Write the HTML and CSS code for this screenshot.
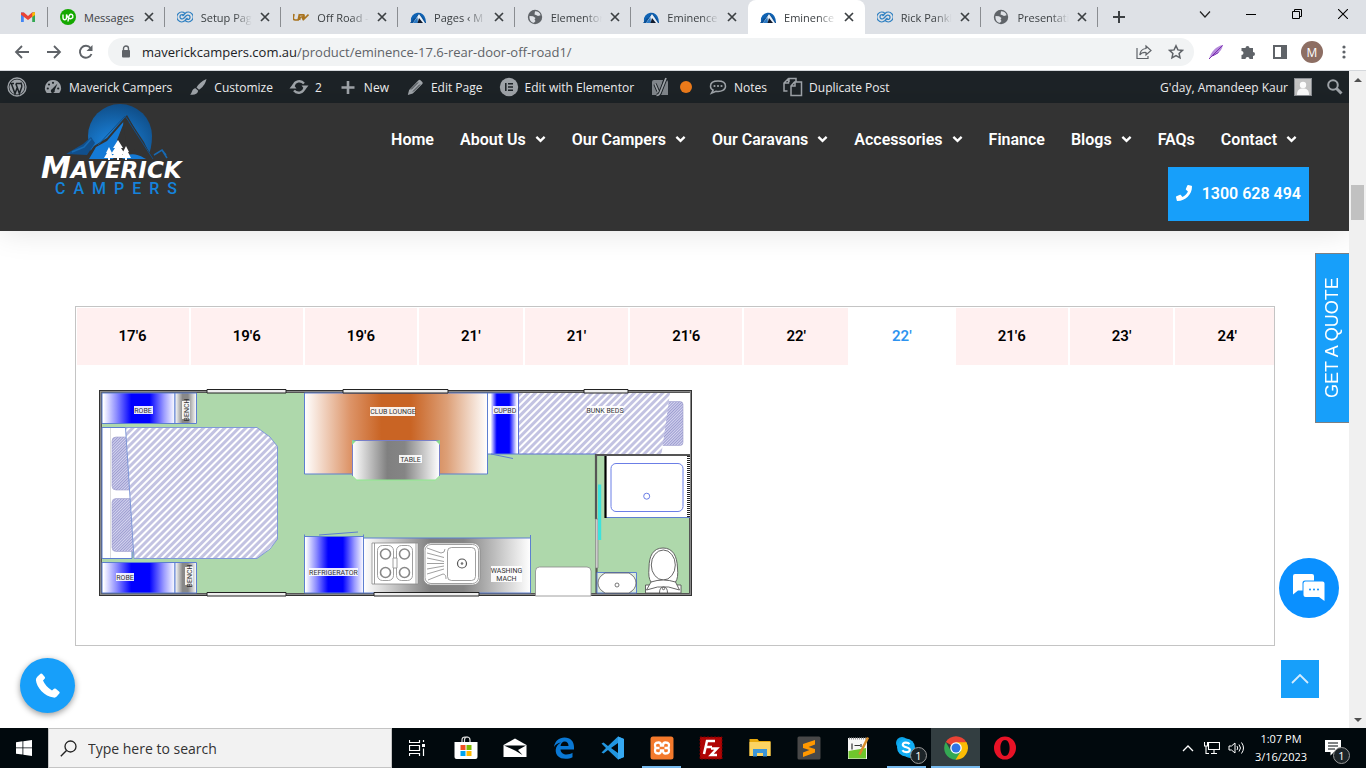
FILE: index.html
```html
<!DOCTYPE html>
<html lang="en">
<head>
<meta charset="utf-8">
<meta name="viewport" content="width=device-width, initial-scale=1">
<title>Eminence 17.6 Rear Door Off Road - Maverick Campers</title>
<link rel="stylesheet" href="styles.css">
</head>
<body>
<svg class="sprite" aria-hidden="true">
  <symbol id="i-close" viewBox="0 0 10 10"><path d="M1 1l8 8M9 1l-8 8" stroke="#3c4043" stroke-width="1.7" fill="none"/></symbol>
  <symbol id="i-peak" viewBox="0 0 16 16"><path d="M1 12A7.300 7.300 0 1 1 15.500 10L16 14H1z" fill="#0f63b4"/><path d="M0 14l4-5 1 .5L9 4l5 6 2 4z" fill="#0c4f94"/><path d="M3 14L9 5l2.500 3.500L15 14z" fill="#e8f0f8"/><path d="M3 14l4.500-6 .5 6z" fill="#2b79c4"/><path d="M7.500 14L9 9l4 5z" fill="#111a2c"/></symbol>
  <symbol id="i-globe" viewBox="0 0 16 16"><circle cx="8" cy="8" r="7.200" fill="#5f6368"/><path d="M2.500 7l3.500.3 2.500 1.700-1 1.500 1 1.500-1.500 1.800C4.500 13.800 2 11 2.500 7zM8 2.200c3 0 5 1.600 5.600 4L11 7 9 6l-1.500-.5z" fill="#dee1e6"/></symbol>
  <symbol id="i-rings" viewBox="0 0 16 16"><g fill="none" stroke="#2f80c2" stroke-width="1.300"><path d="M8 4.500A4.800 4.800 0 1 0 8 11.500L10.500 9M8 11.500A4.800 4.800 0 1 0 8 4.500L5.500 7"/><path d="M9.500 6.500L7 9A2.200 2.200 0 1 1 7 6.500M6.500 9.500L9 7A2.200 2.200 0 1 1 9 9.500"/></g></symbol>
  <symbol id="i-down" viewBox="0 0 12 8"><path d="M1.500 1.800L6 6l4.500-4.200" fill="none" stroke="#fff" stroke-width="2.600"/></symbol>
</svg>

<div class="tabstrip">
  <nav class="tabs" aria-label="Browser tabs">
    <a class="tab pinned" href="#" aria-label="Gmail"><svg width="16" height="16" viewBox="0 0 16 16"><path d="M1 3.500h2.800V13H1z" fill="#4285f4"/><path d="M12.200 3.500H15V13h-2.800z" fill="#34a853"/><path d="M1 3.500h3L8 7l4-3.500h3v2.300L8 11 1 5.800z" fill="#ea4335"/><path d="M12.200 4L15 3v3l-2.800 2z" fill="#fbbc04"/></svg></a>
    <a class="tab" href="#"><svg width="16" height="16" viewBox="0 0 16 16"><circle cx="8" cy="8" r="8" fill="#14a800"/><path d="M3 5.500v3c0 3 3.500 3 3.500 0v-3c1 3.500 3.500 5 5 4 2.500-1.500 1.300-4.500-.8-4.300C8.500 5.500 8.500 9 8 12.500" fill="none" stroke="#fff" stroke-width="1.400"/></svg><span class="tab-title whole">Messages</span><svg class="tab-x"><use href="#i-close"/></svg></a>
    <a class="tab" href="#"><svg width="16" height="16"><use href="#i-rings"/></svg><span class="tab-title">Setup Pag</span><svg class="tab-x"><use href="#i-close"/></svg></a>
    <a class="tab" href="#"><svg width="16" height="16" viewBox="0 0 16 16"><path d="M1 5l-.8 4q0 2 2 2h3l1.300-6M6.500 11l.8-3.500M7 5.800h3.500q1 2-1.500 2.200l1.500 3M11 5.500v4.500l4.500-4.500" fill="none" stroke="#a97420" stroke-width="1.700"/></svg><span class="tab-title">Off Road -</span><svg class="tab-x"><use href="#i-close"/></svg></a>
    <a class="tab" href="#"><svg width="16" height="16"><use href="#i-peak"/></svg><span class="tab-title">Pages ‹ M</span><svg class="tab-x"><use href="#i-close"/></svg></a>
    <a class="tab" href="#"><svg width="16" height="16"><use href="#i-globe"/></svg><span class="tab-title">Elementor</span><svg class="tab-x"><use href="#i-close"/></svg></a>
    <a class="tab bare" href="#"><svg width="16" height="16"><use href="#i-peak"/></svg><span class="tab-title">Eminence</span><svg class="tab-x"><use href="#i-close"/></svg></a>
    <a class="tab current" href="#" aria-current="page"><svg width="16" height="16"><use href="#i-peak"/></svg><span class="tab-title">Eminence</span><svg class="tab-x"><use href="#i-close"/></svg></a>
    <a class="tab" href="#"><svg width="16" height="16"><use href="#i-rings"/></svg><span class="tab-title">Rick Pankl</span><svg class="tab-x"><use href="#i-close"/></svg></a>
    <a class="tab" href="#"><svg width="16" height="16"><use href="#i-globe"/></svg><span class="tab-title">Presentati</span><svg class="tab-x"><use href="#i-close"/></svg></a>
  </nav>
  <button class="new-tab" aria-label="New tab"><svg width="12" height="12" viewBox="0 0 12 12"><path d="M6 0v12M0 6h12" stroke="#3c4043" stroke-width="2"/></svg></button>
  <div class="win-controls">
    <button aria-label="Search tabs"><svg width="12" height="12" viewBox="0 0 12 12"><path d="M1 3.500L6 9l5-5.500" fill="none" stroke="#222" stroke-width="1.200"/></svg></button>
    <button aria-label="Minimize"><svg width="10" height="10" viewBox="0 0 10 10"><path d="M0 5.500h10" stroke="#000"/></svg></button>
    <button aria-label="Restore"><svg width="10" height="10" viewBox="0 0 10 10"><path d="M.5 2.500h7v7h-7zM2.500 2.500v-2h7v7h-2" fill="none" stroke="#000"/></svg></button>
    <button aria-label="Close"><svg width="10" height="10" viewBox="0 0 10 10"><path d="M0 0l10 10M10 0L0 10" stroke="#000" stroke-width="1.100"/></svg></button>
  </div>
</div>

<div class="toolbar">
  <button class="tool" aria-label="Back"><svg width="16" height="16" viewBox="0 0 16 16"><path d="M15 8H2M8 2L2 8l6 6" fill="none" stroke="#5f6368" stroke-width="1.800"/></svg></button>
  <button class="tool" aria-label="Forward"><svg width="16" height="16" viewBox="0 0 16 16"><path d="M1 8h13M8 2l6 6-6 6" fill="none" stroke="#5f6368" stroke-width="1.800"/></svg></button>
  <button class="tool" aria-label="Reload"><svg width="16" height="16" viewBox="0 0 16 16"><path d="M13.500 10A6 6 0 1 1 12.600 4" fill="none" stroke="#5f6368" stroke-width="1.900"/><path d="M14.500 1v6h-6z" fill="#5f6368"/></svg></button>
  <div class="omnibox">
    <svg width="10" height="14" viewBox="0 0 10 14"><path d="M2.500 6V3.500a2.500 2.500 0 0 1 5 0V6" fill="none" stroke="#5f6368" stroke-width="1.400"/><rect x="1" y="5" width="8" height="7.500" rx="1" fill="#5f6368"/></svg>
    <a class="url" href="#"><span>maverickcampers.com.au</span>/product/eminence-17.6-rear-door-off-road1/</a>
    <button aria-label="Share"><svg width="16" height="16" viewBox="0 0 16 16"><path d="M1 4v10.500h11V12M10 2l5 4.500-5 4.500V8.500C7 8.300 5 9 3.800 11 4 7.500 6 5 10 4.500z" fill="none" stroke="#5f6368" stroke-width="1.200"/></svg></button>
    <button aria-label="Bookmark"><svg width="16" height="16" viewBox="0 0 16 16"><path d="M8 1.800l1.900 4.100 4.500.5-3.300 3 .9 4.400L8 11.600l-4 2.200.9-4.400-3.300-3 4.500-.5z" fill="none" stroke="#5f6368" stroke-width="1.500"/></svg></button>
  </div>
  <button class="ext" aria-label="Pen extension"><svg width="16" height="16" viewBox="0 0 16 16"><path d="M1 15C3 8 8 2 15 1c-1 5-5 10-12 11z" fill="#b58adb"/><path d="M1 15L14.500 1.500M4.500 12l6-3.500" fill="none" stroke="#7b2fb0" stroke-width="1"/></svg></button>
  <button class="ext" aria-label="Extensions"><svg width="16" height="16" viewBox="0 0 16 16"><path d="M1.500 4h4a2 2 0 1 1 4 0h3.500v4a2 2 0 1 1 0 4v3H9.500a2 2 0 1 0-4 0h-4v-4a2 2 0 1 0 0-4z" fill="#5f6368"/></svg></button>
  <button class="ext" aria-label="Side panel"><svg width="14" height="14" viewBox="0 0 14 14"><rect x="1" y="1" width="12" height="12" fill="#fff" stroke="#5f6368" stroke-width="2"/><path d="M8 1h5v12H8z" fill="#5f6368"/></svg></button>
  <button class="ext" aria-label="Profile"><span class="avatar-m">M</span></button>
  <button class="ext" aria-label="Menu"><svg width="4" height="16" viewBox="0 0 4 16"><g fill="#5f6368"><circle cx="2" cy="3" r="1.600"/><circle cx="2" cy="8" r="1.600"/><circle cx="2" cy="13" r="1.600"/></g></svg></button>
</div>

<div class="viewport">
  <div class="page">
    <nav class="adminbar" aria-label="WordPress toolbar">
      <a href="#" aria-label="About WordPress"><svg width="20" height="20" viewBox="0 0 20 20"><circle cx="10" cy="10" r="9" fill="none" stroke="#a0a5aa" stroke-width="1.400"/><circle cx="10" cy="10" r="7.600" fill="#a0a5aa"/><path d="M3 6.500h4M9 6.500h4.500M4.300 6.500L8 16.500l2.300-6M8.800 6.500l3.600 10 2.300-6.500c.6-2-.5-2.800-.9-4.500" fill="none" stroke="#1d2327" stroke-width="1.500"/></svg></a>
      <a href="#"><svg width="20" height="20" viewBox="0 0 20 20"><path d="M10 3a8 8 0 0 0-6.500 12.700q.4.300 1 .3h11q.6 0 1-.3A8 8 0 0 0 10 3z" fill="#a0a5aa"/><g fill="#1d2327"><circle cx="10" cy="5.800" r="1.100"/><circle cx="6" cy="7.500" r="1.100"/><circle cx="4.800" cy="11.500" r="1.100"/><circle cx="15.200" cy="11.500" r="1.100"/><path d="M14.500 6.500l-2.800 6.800a2 2 0 1 1-2.600-1.200z"/></g></svg>Maverick Campers</a>
      <a href="#"><svg width="20" height="20" viewBox="0 0 20 20"><path d="M18.500 2c-5 2-8.500 5.500-10 8.500l2.500 2.300c3-1.800 6.500-5.800 7.500-10.800zM7.600 11.300l2.600 2.500c-.5 3.500-4.500 4.700-8.200 3.700 2.200-.8 1.500-6 5.600-6.200z" fill="#a0a5aa"/></svg>Customize</a>
      <a href="#"><svg width="20" height="20" viewBox="0 0 20 20"><path d="M4.500 9A6 6 0 0 1 15 6.500M15.500 11A6 6 0 0 1 5 13.500" fill="none" stroke="#a0a5aa" stroke-width="2.300"/><path d="M12.500 8.500h7L16 13zM.5 11.500h7L4 7z" fill="#a0a5aa"/></svg>2</a>
      <a href="#"><svg width="20" height="20" viewBox="0 0 20 20"><path d="M10 4v13M3.500 10.500h13" stroke="#a0a5aa" stroke-width="2.600"/></svg>New</a>
      <a href="#"><svg width="20" height="20" viewBox="0 0 20 20"><path d="M13.500 3.200q1-1 2 0l1.800 1.800q1 1 0 2l-9.500 9.500-5 1.500 1.300-5z" fill="#a0a5aa"/><path d="M6 12.500l7-7M8 14.500l7-7" stroke="#1d2327" stroke-width=".8"/></svg>Edit Page</a>
      <a href="#"><svg width="20" height="20" viewBox="0 0 20 20"><circle cx="10" cy="10" r="9.200" fill="#a0a5aa"/><path d="M6.800 6v8M9 6.800h5M9 10h5M9 13.200h5" stroke="#1d2327" stroke-width="1.500"/></svg>Edit with Elementor</a>
      <a class="yoast" href="#" aria-label="Yoast SEO"><svg width="20" height="20" viewBox="0 0 20 20"><path d="M4 3h9l-4 15H2V5q0-2 2-2zM16 3q2 0 2 2v13h-7z" fill="#82878c"/><path d="M5 7l3 7M16 1l-6 15q-1 2.500-3.500 2.500" fill="none" stroke="#1d2327" stroke-width="3.400"/><path d="M5 7l3.200 7.500M16 1l-6 15q-1 2.500-3.500 2.500" fill="none" stroke="#a0a5aa" stroke-width="1.700"/></svg><i class="dot"></i></a>
      <a href="#"><svg width="20" height="20" viewBox="0 0 20 20"><path d="M10 4c-4.500 0-7.500 2-7.500 5.200 0 1.800 1 3.200 2.700 4l-1.700 3 4.500-2c5.500.8 9.500-1.300 9.500-5C17.500 6 14.500 4 10 4z" fill="none" stroke="#a0a5aa" stroke-width="1.500"/><g fill="#a0a5aa"><circle cx="6.500" cy="9" r="1.100"/><circle cx="10" cy="9" r="1.100"/><circle cx="13.500" cy="9" r="1.100"/></g></svg>Notes</a>
      <a href="#"><svg width="20" height="20" viewBox="0 0 20 20"><path d="M6 5V1.500h7V5M4.500 14H1V6l4.500-4.500M8 18.500V9l3.500-4h7v13.500zM1 6h4.500V2M8 9h4V5" fill="none" stroke="#a0a5aa" stroke-width="1.500"/></svg>Duplicate Post</a>
      <a class="howdy" href="#">G'day, Amandeep Kaur<svg width="18" height="18" viewBox="0 0 18 18"><rect x=".5" y=".5" width="17" height="17" fill="#c6c6c6" stroke="#8c8f94"/><circle cx="9" cy="7" r="3.200" fill="#fff"/><path d="M3 17c0-5 2-6.500 6-6.500s6 1.500 6 6.500z" fill="#fff"/></svg></a>
      <a class="find" href="#" aria-label="Search"><svg width="20" height="20" viewBox="0 0 20 20"><circle cx="8" cy="8" r="4.800" fill="none" stroke="#a0a5aa" stroke-width="2"/><path d="M11.500 11.500l5 5" stroke="#a0a5aa" stroke-width="3"/></svg></a>
    </nav>

    <header class="site-header">
      <a class="logo" href="#" aria-label="Maverick Campers">
        <svg width="150" height="94" viewBox="40 103 150 94">
          <defs>
            <radialGradient id="sky" cx=".4" cy=".75" r=".8"><stop offset="0" stop-color="#1b8ae8"/><stop offset="1" stop-color="#0f4a82"/></radialGradient>
          </defs>
          <path d="M88 136A32 32 0 1 1 152 136Q152 149 147 159H95Q88 149 88 136z" fill="url(#sky)"/>
          <path d="M84 160L94 146 107 138 127 115 131 122 152 159z" fill="#333"/>
          <path d="M89 159l7-12 11-6 18-21-8 20 3 5-7 14z" fill="#147ad6"/>
          <path d="M128 119l5 8 17 26-4 6q-3-6-14-13z" fill="#333"/>
          <path d="M123 121l5-3 16 24 8 17h-13l-5-10-8-7z" fill="#333"/>
          <path d="M129 122l24 37M98 145l27-29 5 7" fill="none" stroke="#124f88" stroke-width="1"/>
          <path d="M66 154l17-10 8-7 4 6-8 12z" fill="#114f8c"/>
          <path d="M72 152l12-5 7-8M154 155l8-5 5 8M162 150l4 5" fill="none" stroke="#1769b2" stroke-width="1.500"/>
          <path d="M122 159q9-9 22-1l2 1z" fill="#147ad6"/>
          <path d="M118 140l5 8h-2l4 6h-3l4 4h-7v2h-2v-2h-7l4-4h-3l4-6h-2zM109 147l3 6h-1l3 5h-4v2h-2v-2h-4l3-5h-1zM126 146l3 6h-1l3 6h-4v2h-2v-2h-4l3-6h-1z" fill="#fff"/>
          <text class="logo-word" x="41" y="178"><tspan class="logo-cap">M</tspan>AVERICK</text>
          <text class="logo-sub" x="55" y="194">CAMPERS</text>
        </svg>
      </a>
      <div class="header-right">
        <nav class="menu" aria-label="Main">
          <a href="#">Home</a>
          <a href="#">About Us<svg><use href="#i-down"/></svg></a>
          <a href="#">Our Campers<svg><use href="#i-down"/></svg></a>
          <a href="#">Our Caravans<svg><use href="#i-down"/></svg></a>
          <a href="#">Accessories<svg><use href="#i-down"/></svg></a>
          <a href="#">Finance</a>
          <a href="#">Blogs<svg><use href="#i-down"/></svg></a>
          <a href="#">FAQs</a>
          <a href="#">Contact<svg><use href="#i-down"/></svg></a>
        </nav>
        <a class="phone" href="#"><svg width="16" height="16" viewBox="0 0 512 512"><path d="M494 25L390 1c-12-3-23 3-28 14l-48 112c-4 10-1 22 7 28l61 50c-36 77-99 140-177 177l-50-61c-6-8-18-11-28-7L15 362c-11 5-17 16-14 28l24 104c3 11 12 18 23 18 256 0 464-207 464-464 0-11-7-21-18-23z" fill="#fff"/></svg>1300 628 494</a>
      </div>
    </header>

    <main class="content">
      <section class="plans">
        <div class="plan-tabs" role="tablist">
          <button role="tab">17'6</button>
          <button role="tab">19'6</button>
          <button role="tab">19'6</button>
          <button role="tab">21'</button>
          <button role="tab">21'</button>
          <button role="tab">21'6</button>
          <button role="tab">22'</button>
          <button role="tab" class="active" aria-selected="true">22'</button>
          <button role="tab">21'6</button>
          <button role="tab">23'</button>
          <button role="tab">24'</button>
        </div>
        <div class="plan-panel" role="tabpanel">
          <svg class="floorplan" width="595" height="208" viewBox="98 389 595 208" role="img" aria-label="22 foot floor plan">
            <defs>
              <linearGradient id="blue"><stop offset=".02" stop-color="#fff"/><stop offset=".2" stop-color="#8c8cff"/><stop offset=".4" stop-color="#00f"/><stop offset=".65" stop-color="#00f"/><stop offset=".85" stop-color="#9c9cff"/><stop offset="1" stop-color="#fff"/></linearGradient>
              <linearGradient id="cupboard"><stop offset=".1" stop-color="#fff"/><stop offset=".3" stop-color="#00f"/><stop offset=".7" stop-color="#00f"/><stop offset=".95" stop-color="#fff"/></linearGradient>
              <linearGradient id="grey"><stop offset="0" stop-color="#fff"/><stop offset=".4" stop-color="#808080"/><stop offset=".6" stop-color="#858585"/><stop offset="1" stop-color="#fff"/></linearGradient>
              <linearGradient id="bench"><stop offset="0" stop-color="#fff"/><stop offset=".35" stop-color="#888"/><stop offset=".6" stop-color="#888"/><stop offset="1" stop-color="#fff"/></linearGradient>
              <linearGradient id="orange"><stop offset="0" stop-color="#fff"/><stop offset=".25" stop-color="#dd9468"/><stop offset=".42" stop-color="#c96424"/><stop offset=".58" stop-color="#c96424"/><stop offset=".78" stop-color="#dda078"/><stop offset="1" stop-color="#fff"/></linearGradient>
              <pattern id="hatch" width="5" height="5" patternUnits="userSpaceOnUse" patternTransform="rotate(45)"><path d="M0 0h5v5H0z" fill="#fff"/><path d="M0 0h3v5H0z" fill="#c3c3e2"/></pattern>
              <pattern id="fine" width="2" height="2" patternUnits="userSpaceOnUse" patternTransform="rotate(45)"><path d="M0 0h2v2H0z" fill="#d6d6f0"/><path d="M0 0h1v2H0z" fill="#9c9cd0"/></pattern>
            </defs>
            <path d="M99 390h593v206H99z" fill="#333"/>
            <path d="M100 391h591v204H100z" fill="#888"/>
            <path d="M101.500 392.500h588v201h-588z" fill="#aed8ab" stroke="#555"/>
            <g stroke="#5d7fd0">
              <path d="M102 393h73v30.500h-73z" fill="url(#blue)"/><path d="M175 393h21.500v30.500H175z" fill="url(#bench)"/>
              <path d="M102 562.500h73V593h-73z" fill="url(#blue)"/><path d="M175 562.500h21.500V593H175z" fill="url(#bench)"/>
              <path d="M102 427.500h30v131h-30z" fill="#fff"/>
            </g>
            <path d="M110.500 428v130" stroke="#ddd"/>
            <g fill="url(#fine)" stroke="#a0a0cc" stroke-width=".6"><rect x="112" y="437" width="24" height="53" rx="4"/><rect x="112" y="498.500" width="26" height="53" rx="4"/></g>
            <path d="M125.500 427.500H257L270 437 277.500 446.500V539L270 549 257 558.500H134z" fill="url(#hatch)" stroke="#7f98d8"/>
            <path d="M304.500 393h183v81h-183z" fill="url(#orange)" stroke="#5d7fd0"/>
            <path d="M352.500 440.500h87V476l-4 4h-79l-4-4z" fill="url(#grey)" stroke="#8dea8d"/>
            <path d="M352.500 476v-35.500h87V476" fill="none" stroke="#7880c8"/>
            <path d="M352 440l4 1-4 4zM440 440l-4 1 4 4z" fill="#8ddb8d"/>
            <path d="M487.500 393h31v61h-31z" fill="url(#cupboard)" stroke="#5d7fd0"/>
            <path d="M491 454l22 4.500M319 535l39-3" stroke="#5d7fd0" fill="none"/>
            <path d="M518.500 393H690v61H518.500z" fill="#fff"/>
            <rect x="660" y="401.500" width="23" height="44" rx="3" fill="url(#fine)" stroke="#a0a0cc" stroke-width=".6"/>
            <path d="M518.500 393H670l-8.500 61h-143z" fill="url(#hatch)"/><path d="M518.500 393v61H596" fill="none" stroke="#5d6fd8"/>
            <path d="M595.500 455H690M596 454v65M596.500 568v26" stroke="#555" stroke-width="2.200"/>
            <path d="M595.500 519h2.500v49h-2.500z" fill="#ccc" stroke="#777" stroke-width=".6"/>
            <path d="M605 456h85v61.500h-85z" fill="#fff"/><path d="M605 517.500h85" stroke="#5d7fd0"/>
            <path d="M605.500 456v62" stroke="#000" stroke-width="2.200"/>
            <rect x="611" y="463.500" width="72" height="48" rx="5" fill="#fff" stroke="#6b7ee6"/><circle cx="646.700" cy="496.200" r="3" fill="none" stroke="#6b7ee6"/>
            <path d="M688.500 456v61" stroke="#222" stroke-width="3" stroke-dasharray="1 1"/>
            <path d="M598 484.500h3.200V540H598z" fill="#3de2dc"/>
            <path d="M363.500 538h167v55h-167z" fill="url(#grey)" stroke="#5d7fd0"/>
            <path d="M304.500 536.500h59V593h-59z" fill="url(#blue)" stroke="#5d7fd0"/>
            <path d="M530.500 535v5M304.500 534.500v4M363.500 534.500v4" stroke="#5d7fd0"/>
            <g fill="#fff" stroke="#888" stroke-width=".8">
              <path d="M372 543h46v41h-46z"/><path d="M374.500 543v41M416 543v41"/>
              <rect x="377.500" y="545.500" width="16" height="35" rx="5"/><rect x="396.500" y="545.500" width="16" height="35" rx="5"/>
              <path d="M393 558h4v10h-4z"/>
              <g fill="none" stroke-width="1.600"><circle cx="385.500" cy="554" r="5"/><circle cx="404.500" cy="554" r="5"/><circle cx="385.500" cy="572.500" r="5"/><circle cx="404.500" cy="572.500" r="5"/></g>
              <rect x="423.500" y="543" width="56.500" height="42" rx="7"/><rect x="425" y="544.500" width="53.500" height="39" rx="6"/><rect x="447.500" y="547.500" width="28" height="33" rx="4"/>
              <circle cx="462" cy="563.500" r="4.500" stroke="#555" stroke-width="1.200"/><circle cx="462" cy="563.500" r="1" fill="#555"/>
              <path d="M427 548l14 5q4 0 4-4M427 553l17 4.500M427 558l17 3.500M427 563.500h17M427 569l17-3M427 574l17-5M428 580l15-6q3 0 3 5" fill="none"/>
              <path d="M535.500 596v-25q0-4 4-4h47.500q4 0 4 4v25z"/>
            </g>
            <path d="M597 572.500h39.500V593H597z" fill="#dcebdc" stroke="#5d7fd0"/>
            <path d="M605 573h24q7 4 7 10t-7 10h-24q-7-4-7-10t7-10z" fill="#fff" stroke="#555" stroke-width=".8"/><circle cx="617" cy="585" r="2" fill="none" stroke="#555" stroke-width=".8"/>
            <g fill="#fff" stroke="#555" stroke-width=".9"><path d="M645.500 585h35.500v8h-35.500z"/><path d="M651 582q-3-4-2-14c0-12 4-20 14-20s14 8 14.500 20q1 10-2 14-5 5-12 5t-12.500-5z"/><ellipse cx="663.300" cy="565" rx="12" ry="15"/><path d="M651 582q12-4 24.500 0l4 8-11-3h-11l-11 3zM659.500 593q0-6 4-6t4 6z"/><circle cx="663.500" cy="588.500" r="1.200"/></g>
            <g fill="#eee" stroke="#222">
              <path d="M207 389.500h79v3.500h-79zM343 389.500h105v3.500H343zM584 389.500h44v3.500h-44zM207 592.500h79v3.500h-79zM374 592.500h105v3.500H374z"/>
            </g>
            <g fill="#fff" opacity=".9"><path d="M134 406h19v8h-19zM370 407h45v9h-45zM399 455h23v8h-23zM493 406h23v8h-23zM587 406h36v8h-36zM309 568h49v8h-49zM491 566h31v16h-31zM116 573h18v8h-18zM182 401h8v18h-8zM185 567h8v18h-8z"/></g>
            <g class="plan-label">
              <text x="143" y="412.500">ROBE</text><text x="393" y="414">CLUB LOUNGE</text><text x="410.500" y="462">TABLE</text><text x="505" y="412.500">CUPBD</text><text x="605" y="412.500">BUNK BEDS</text><text x="333.500" y="574.500">REFRIGERATOR</text><text x="506.500" y="572.500">WASHING</text><text x="506.500" y="581">MACH</text><text x="125" y="579.500">ROBE</text>
              <text transform="translate(188.500 410) rotate(-90)">BENCH</text><text transform="translate(191.500 576) rotate(-90)">BENCH</text>
            </g>
          </svg>
        </div>
      </section>
    </main>

    <button class="quote">GET A QUOTE</button>
    <button class="chat" aria-label="Chat"><svg width="32" height="28" viewBox="0 0 32 28"><path d="M2 0h17q2 0 2 2v4.500h-9q-2.500 0-2.500 2.500v7.500H5L0 20.500V2q0-2 2-2z" fill="#fff"/><path d="M12.500 7.500h17q2 0 2 2V27l-5.500-4H12.500q-2 0-2-2V9.500q0-2 2-2z" fill="#fff"/><g fill="#0a90ff"><circle cx="17" cy="15.500" r="1"/><circle cx="21" cy="15.500" r="1"/><circle cx="25" cy="15.500" r="1"/></g></svg></button>
    <button class="call" aria-label="Call"><svg width="26" height="26" viewBox="0 0 26 26"><path d="M2.500 3.500L5.500.800q1-.8 1.800.200l2.500 3q.7 1-.2 1.800L8 7.500q2.500 6 9 10l2-1.700q1-.8 1.800 0l3.500 3q.9 1 0 1.800l-2.600 3q-1 1.200-3 1C9.500 23.500 1.500 14.500.9 7Q.8 5 2.500 3.500z" fill="#fff"/></svg></button>
    <a class="to-top" href="#" aria-label="Back to top"><svg width="18" height="10" viewBox="0 0 18 10"><path d="M1 9l8-8 8 8" fill="none" stroke="#d4ecfe" stroke-width="1.800"/></svg></a>
  </div>
  <div class="scrollbar" aria-hidden="true">
    <span class="arrow up"></span><span class="before"></span><span class="thumb"></span><span class="after"></span><span class="arrow down"></span>
  </div>
</div>

<footer class="taskbar">
  <button class="start" aria-label="Start"><svg width="16" height="16" viewBox="0 0 16 16"><path d="M0 2.200L6.500 1.300v6.200H0zM7.300 1.200L16 0v7.500H7.300zM0 8.300h6.500v6.300L0 13.700zM7.300 8.300H16V16l-8.700-1.200z" fill="#fff"/></svg></button>
  <label class="search"><svg width="17" height="17" viewBox="0 0 17 17"><circle cx="10.500" cy="6.500" r="5.500" fill="none" stroke="#222" stroke-width="1.300"/><path d="M6.500 10.500L.8 16.200" stroke="#222" stroke-width="1.400"/></svg><input type="text" placeholder="Type here to search" aria-label="Search"></label>
  <div class="apps">
    <button aria-label="Task view"><svg width="16" height="16" viewBox="0 0 16 16"><path d="M.5 0v2.500h10V0M.5 5.500h10v5H.5zM.5 16v-2.500h10V16M14.500 0v2M14.500 8.500V16" fill="none" stroke="#fff" stroke-width="1.200"/><path d="M13 4h3v3h-3z" fill="#fff"/></svg></button>
    <button aria-label="Store"><svg width="24" height="24" viewBox="0 0 24 24"><path d="M8 7V4q0-3 3-3h2q3 0 3 3v3M10.500 7V4q0-3 3-3" fill="none" stroke="#ddd" stroke-width="1.200"/><path d="M.5 6h23v15q0 2-2 2h-19q-2 0-2-2z" fill="#fff"/><path d="M6.500 9h5v5h-5z" fill="#f25022"/><path d="M12.500 9h5v5h-5z" fill="#7fba00"/><path d="M6.500 15h5v5h-5z" fill="#00a4ef"/><path d="M12.500 15h5v5h-5z" fill="#ffb900"/></svg></button>
    <button aria-label="Mail"><svg width="24" height="20" viewBox="0 0 24 20"><path d="M.5 7L12 .500 23.500 7v12H.5z" fill="#fff"/><path d="M1 7.500h22l-8 4.500 4.500 5L12 12.500z" fill="#01090d"/></svg></button>
    <button aria-label="Edge"><svg width="22" height="22" viewBox="0 0 22 22"><path d="M1 10C2 4 6 .500 11.500.500c6 0 9.500 4 9.500 9.500v2.500H7.500c.3 3.500 3 5 6 5 2.500 0 4.500-.6 6-1.700v4.500c-2 1-4.300 1.500-7 1.500C6 21.800 2.500 18 2.700 13 3 9.500 5 7 8 5.500 5 6 2.500 7.500 1 10zM7.500 9h8c0-3-1.500-4.500-3.800-4.500C9.500 4.500 8 6 7.500 9z" fill="#0a78d4"/></svg></button>
    <button aria-label="Visual Studio Code"><svg width="24" height="24" viewBox="0 0 24 24"><path d="M17 .500l6 2.500v18l-6 2.500L7 14l-4.500 3.500L.500 16.500l4.500-4.500L.500 7.500 2.500 6.500 7 10zM17 7l-7 5 7 5z" fill="#2196e0" fill-rule="evenodd"/><path d="M17 .500l6 2.500v18l-6 2.500z" fill="#36a9f2"/></svg></button>
    <button class="running" aria-label="XAMPP"><svg width="24" height="24" viewBox="0 0 24 24"><rect x=".5" y=".5" width="23" height="23" rx="2.500" fill="#f47a2c"/><path d="M5.500 12Q3.500 6.500 8.500 6.500q2.500 0 2.500 3h2q0-3 2.500-3 5 0 3 5.500 2 5.500-3 5.500-2.500 0-2.500-3h-2q0 3-2.500 3-5 0-3-5.500zM5.500 12h4M14.500 12h4" fill="none" stroke="#fff" stroke-width="2.300"/></svg></button>
    <button aria-label="FileZilla"><svg width="24" height="24" viewBox="0 0 24 24"><rect x="1" y="1" width="22" height="22" fill="#b00505" stroke="#7b0000" stroke-dasharray="2 1.500"/><path d="M5 18L8 5h8M6.500 11H13M12 12.500h6L12 19h6" fill="none" stroke="#fff" stroke-width="2.500"/></svg></button>
    <button aria-label="File Explorer"><svg width="22" height="20" viewBox="0 0 22 20"><path d="M.5 1h8l1.500 2h11.500v15H.5z" fill="#e8a90c"/><path d="M.5 4h21v14H.5z" fill="#fcd462"/><path d="M4 18.500V11h14v7.500h-4V15H8v3.500z" fill="#3c96d8"/></svg></button>
    <button aria-label="Sublime Text"><svg width="24" height="24" viewBox="0 0 24 24"><rect x=".5" y=".5" width="23" height="23" rx="1.500" fill="#484848"/><path d="M6 8l12-4v4.500L11.500 11 18 13v3.500L6 21v-4.500l6.500-2.500L6 12z" fill="#ff9800"/></svg></button>
    <button aria-label="Notepad++"><svg width="24" height="24" viewBox="0 0 24 24"><path d="M2 2h19v21H2z" fill="#f7f7f7"/><path d="M2.500 15L20 12v10.500H2.500z" fill="#6fc62c"/><path d="M3 2.500h17" stroke="#999" stroke-width="2" stroke-dasharray="1 1"/><path d="M6 7.500v6M8.500 9.500h5.500M15 8v3" stroke="#333" stroke-width="1.200"/><path d="M22 1.500l-7 14-1.500 3" fill="none" stroke="#d88d2a" stroke-width="2.500"/></svg></button>
    <button class="running" aria-label="Skype"><svg width="24" height="24" viewBox="0 0 24 24"><circle cx="7" cy="7" r="6" fill="#0aa4ea"/><circle cx="15" cy="16" r="6" fill="#0aa4ea"/><circle cx="11" cy="11.500" r="9" fill="#12aef5"/><path d="M14.500 8.200C13 6 7.800 6 7.800 8.800c0 3.200 7 1.800 7 5 0 3-5.800 3.200-7.400.5" fill="none" stroke="#fff" stroke-width="2.200"/></svg><span class="badge">1</span></button>
    <button class="running focused" aria-label="Chrome"><svg width="24" height="24" viewBox="0 0 24 24"><path d="M12 12L1.800 6A11.800 11.800 0 0 1 22.200 6z" fill="#ea4335"/><path d="M12 12L22.200 6A11.800 11.800 0 0 1 11.500 23.800z" fill="#fbbc05"/><path d="M12 12l5 3-5.500 8.800A11.800 11.800 0 0 1 1.800 6L7 15z" fill="#34a853"/><path d="M12 6.300h10.300q1.800 4 1.200 7L17.500 12z" fill="#fbbc05"/><circle cx="12" cy="12" r="5.800" fill="#fff"/><circle cx="12" cy="12" r="4.500" fill="#2f74e6"/></svg></button>
    <button aria-label="Opera"><svg width="24" height="24" viewBox="0 0 24 24"><path d="M12 .500a11 11.500 0 1 0 0 23 11 11.500 0 1 0 0-23zM12 4c2.800 0 4.600 3.500 4.600 8s-1.800 8-4.600 8-4.600-3.500-4.600-8 1.800-8 4.600-8z" fill="#e81226" fill-rule="evenodd"/></svg></button>
  </div>
  <div class="tray">
    <button aria-label="Show hidden icons"><svg width="12" height="8" viewBox="0 0 12 8"><path d="M1 7l5-5 5 5" fill="none" stroke="#fff" stroke-width="1.300"/></svg></button>
    <button aria-label="Network"><svg width="16" height="14" viewBox="0 0 16 14"><path d="M4.500 1.500h11v7h-11zM10 8.500V12M7 12.500h6M.5 1v4h3V1M2 5v7.500h3" fill="none" stroke="#fff" stroke-width="1.100"/></svg></button>
    <button aria-label="Volume"><svg width="17" height="14" viewBox="0 0 17 14"><path d="M1 5v4h2.500L7 12V2L3.500 5z" fill="none" stroke="#fff"/><path d="M9 5q1.500 2 0 4M11 3.500q3 3.500 0 7M13.500 1.500q4 5.500 0 11" fill="none" stroke="#fff"/></svg></button>
    <button class="clock"><span>1:07 PM</span><span>3/16/2023</span></button>
    <button class="notify" aria-label="Notifications"><svg width="16" height="16" viewBox="0 0 16 16"><path d="M0 0h16v12H9l-3.500 3.500V12H0z" fill="#fff"/><path d="M3 3h10M3 6h10M3 9h7" stroke="#01090d"/></svg><span class="badge">1</span></button>
  </div>
</footer>
</body>
</html>
```
FILE: styles.css
```css
* { box-sizing: border-box; }
html, body { height: 100%; }
body {
  margin: 0;
  display: flex;
  flex-direction: column;
  overflow: hidden;
  background: #fff;
  font-family: "Open Sans", "Noto Sans", sans-serif;
}
button { border: 0; background: none; padding: 0; margin: 0; font: inherit; color: inherit; }
a { color: inherit; text-decoration: none; }
svg { flex: none; }
.sprite { position: absolute; width: 0; height: 0; }

/* Browser tabs */
.tabstrip { display: flex; flex: none; height: 34px; background: #dee1e6; }
.tabs { display: flex; flex: 1; min-width: 0; }
.tab {
  display: flex;
  flex: 1 1 0;
  min-width: 0;
  align-items: center;
  gap: 8px;
  padding: 0 11px 0 12px;
  font-size: 11px;
  color: #3c4043;
  background: linear-gradient(#8a8d91, #8a8d91) right center / 1px 20px no-repeat;
}
.tab.pinned { flex: 0 0 48px; justify-content: center; padding: 0 0 0 8px; }
.tab.bare { background: none; }
.tab.current { background: #fff; border-radius: 8px 8px 0 0; }
.tab-title {
  flex: 1;
  min-width: 0;
  white-space: nowrap;
  -webkit-mask-image: linear-gradient(90deg, #000 65%, transparent);
  mask-image: linear-gradient(90deg, #000 65%, transparent);
}
.tab-title.whole { -webkit-mask-image: none; mask-image: none; }
.tab-x { width: 10px; height: 10px; }
.new-tab { width: 42px; display: grid; place-items: center; }
.win-controls { display: flex; margin-left: 42px; padding-bottom: 6px; }
.win-controls button { width: 46px; display: grid; place-items: center; }

/* Browser toolbar */
.toolbar {
  display: flex;
  flex: none;
  align-items: center;
  height: 37px;
  padding: 0 6px;
  border-bottom: 1px solid #d5d8dc;
  background: #fff;
}
.tool { width: 32px; display: grid; place-items: center; }
.omnibox {
  display: flex;
  flex: 1;
  min-width: 0;
  align-items: center;
  height: 28px;
  margin: 0 6px;
  padding: 0 10px 0 13px;
  border-radius: 14px;
  background: #f1f3f4;
}
.url { flex: 1; min-width: 0; margin-left: 11px; font-size: 13px; color: #5f6368; white-space: nowrap; overflow: hidden; }
.url span { color: #202124; }
.omnibox button { margin-left: 16px; display: grid; }
.ext { width: 32px; display: grid; place-items: center; }
.avatar-m {
  display: grid;
  place-items: center;
  width: 22px;
  height: 22px;
  border-radius: 50%;
  background: #8d6e63;
  color: #fff;
  font-size: 12px;
}

/* Page area */
.viewport { display: flex; flex: 1; min-height: 0; }
.page { position: relative; flex: 1; min-width: 0; overflow: hidden; font-family: Roboto, sans-serif; }
.scrollbar { display: flex; flex-direction: column; width: 17px; padding: 0 2px; background: #f0f0f0; }
.arrow { height: 17px; display: grid; place-items: center; }
.arrow::after { content: ""; border: 4px solid transparent; }
.arrow.up::after { border-top: 0; border-bottom-color: #505050; }
.arrow.down::after { border-bottom: 0; border-top-color: #505050; }
.before { flex: 97; }
.thumb { flex: 35; background: #c1c1c1; }
.after { flex: 491; }

/* WordPress admin bar */
.adminbar {
  display: flex;
  align-items: center;
  height: 32px;
  background: #1d2327;
  color: #f0f0f1;
  font-family: "Open Sans", "Noto Sans", sans-serif;
  font-size: 12px;
  white-space: nowrap;
}
.adminbar a { display: flex; align-items: center; gap: 6px; padding: 0 9px 0 7px; }
.adminbar .yoast { gap: 10px; }
.dot { width: 12px; height: 12px; border-radius: 50%; background: #ee7c1b; }
.adminbar .howdy { margin-left: auto; }
.adminbar .find { padding: 0 4px; }

/* Site header */
.site-header {
  position: relative;
  display: flex;
  justify-content: space-between;
  padding: 0 40px 10px;
  background: #333;
  box-shadow: 0 0 30px rgba(0, 0, 0, .12);
}
.logo svg { display: block; }
.logo-word { font: italic 700 23px "DejaVu Sans", sans-serif; fill: #fff; }
.logo-cap { font-size: 30px; }
.logo-sub { font: 500 16px Roboto, sans-serif; letter-spacing: 8px; fill: #1583dc; }
.header-right { display: flex; flex-direction: column; align-items: flex-end; padding-top: 8px; }
.menu {
  display: flex;
  align-items: center;
  gap: 26px;
  height: 56px;
  padding-right: 12px;
  font-size: 16px;
  font-weight: 600;
  color: #fff;
  white-space: nowrap;
}
.menu a { display: flex; align-items: center; gap: 9px; }
.menu svg { width: 11px; height: 8px; }
.phone {
  display: flex;
  align-items: center;
  gap: 10px;
  height: 54px;
  padding: 0 8px 2px;
  background: #179ffa;
  color: #fff;
  font-size: 16px;
  font-weight: 600;
}

/* Floor plan tabs */
.content { padding: 75px 40px 0; }
.plans { max-width: 1200px; margin: 0 auto; border: 1px solid #c4c4c4; }
.plan-tabs { display: flex; overflow: hidden; }
.plan-tabs button {
  flex: none;
  padding: 0 42px 2px;
  height: 59px;
  border: 1px solid #fff;
  background: #fff0f0;
  background-clip: padding-box;
  color: #000;
  font-size: 15px;
  font-weight: 600;
}
.plan-tabs .active { background: #fff; color: #2e93f0; }
.plan-panel { padding: 23px 22px 48px; }
.floorplan { display: block; max-width: 100%; }
.plan-label { font: 7px Roboto, sans-serif; fill: #333; text-anchor: middle; }

/* Floating controls */
.quote {
  position: absolute;
  right: 0;
  top: 182px;
  width: 34px;
  height: 170px;
  border: 1px solid #7d7f82;
  border-width: 1px 1px 1px 0;
  background: #179ffa;
  color: #fff;
  font: 18px "Liberation Sans", Arial, sans-serif;
  writing-mode: vertical-rl;
  transform: rotate(180deg);
}
.chat, .call, .to-top { position: absolute; display: grid; place-items: center; }
.chat { right: 10px; bottom: 110px; width: 60px; height: 60px; border-radius: 50%; background: #0a90ff; }
.call { left: 20px; bottom: 15px; width: 55px; height: 55px; border-radius: 50%; background: #179ffa; box-shadow: 0 2px 6px rgba(0, 0, 0, .4); }
.to-top { right: 30px; bottom: 30px; width: 38px; height: 38px; background: #179ffa; }

/* Taskbar */
.taskbar { display: flex; flex: none; height: 40px; background: #01090d; color: #fff; }
.start { width: 48px; display: grid; place-items: center; }
.search { display: flex; align-items: center; gap: 11px; width: 344px; padding: 0 11px; border: 1px solid #c4c4c4; background: #f2f2f2; }
.search input { flex: 1; min-width: 0; border: 0; padding: 0; background: none; outline: 0; font: 14px "Open Sans", "Noto Sans", sans-serif; }
.search input::placeholder { color: #333; opacity: 1; }
.apps { display: flex; }
.apps button { position: relative; width: 49px; display: grid; place-items: center; }
.running::after { content: ""; position: absolute; left: 5px; right: 5px; bottom: 0; height: 2px; background: #76b9ed; }
.running.focused { background: #333e41; }
.running.focused::after { left: 0; right: 0; }
.badge {
  position: absolute;
  right: 4px;
  bottom: 4px;
  width: 17px;
  height: 17px;
  border: 1px solid #999;
  border-radius: 50%;
  background: #1c2428;
  color: #fff;
  font-size: 11px;
  line-height: 15px;
  text-align: center;
}
.tray { display: flex; margin-left: auto; }
.tray button { width: 24px; display: grid; place-items: center; }
.tray .clock { width: 66px; align-content: center; font-size: 11px; line-height: 18px; }
.tray .notify { position: relative; width: 52px; padding-right: 14px; }
.notify .badge { right: 16px; }
```
